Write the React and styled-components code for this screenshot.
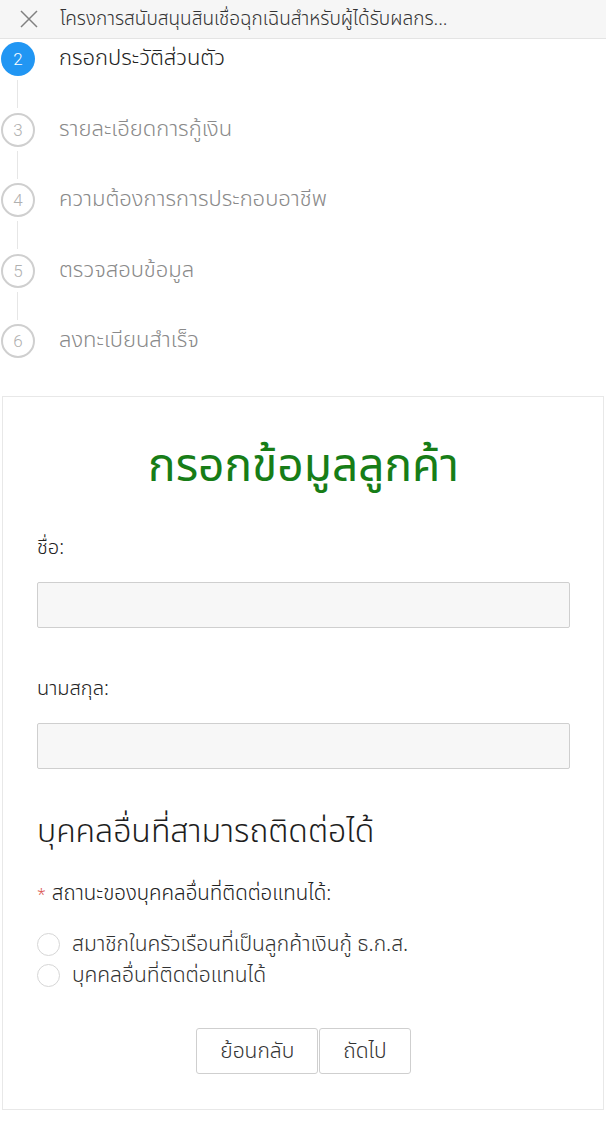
import React from "react";
import styled, { createGlobalStyle } from "styled-components";

const Global = createGlobalStyle`
  html, body { margin: 0; padding: 0; background: #fff; }
  body { font-family: "Noto Sans Thai", "Noto Sans", "Liberation Sans", sans-serif; font-weight: 300; color: #222; }
  * { box-sizing: border-box; }
`;

const Page = styled.div`
  width: 606px;
  min-height: 1140px;
  background: #fff;
`;

const TopBar = styled.header`
  height: 39px;
  display: flex;
  align-items: center;
  background: #f6f6f6;
  border-bottom: 1px solid #e4e4e4;
  padding-left: 20px;
  gap: 22px;
`;

const TopTitle = styled.div`
  font-size: 19px;
  color: #333;
  white-space: nowrap;
`;

const Steps = styled.ol`
  list-style: none;
  margin: 0;
  padding: 3px 0 0 1px;
`;

const Step = styled.li`
  display: grid;
  grid-template-columns: 34px 1fr;
  column-gap: 24px;
`;

const Circle = styled.div`
  width: 34px;
  height: 34px;
  border-radius: 50%;
  display: flex;
  align-items: center;
  justify-content: center;
  font-family: "Roboto", "Liberation Sans", sans-serif;
  font-weight: 300;
  font-size: 17px;
  ${(p) =>
    p.$active
      ? `background: #2196f3; color: #fff;`
      : `border: 2px solid #cfcfcf; color: #b0b0b0;`}
`;

const StepText = styled.div`
  font-size: 22px;
  line-height: 34px;
  color: ${(p) => (p.$active ? "#222" : "#8a8a8a")};
`;

const Connector = styled.div`
  width: 1px;
  height: 28px;
  margin: 4px 0 4.5px 16px;
  background: #e6e6e6;
`;

const Card = styled.section`
  margin: 38px 2px 0 2px;
  border: 1px solid #e8e8e8;
  padding: 40px 33px 35px 34px;
  display: flex;
  flex-direction: column;
`;

const CardTitle = styled.h1`
  margin: 0 0 37px;
  text-align: center;
  font-size: 46px;
  font-weight: 400;
  color: #177d17;
  line-height: 60px;
`;

const Label = styled.label`
  font-size: 20px;
  color: #222;
  line-height: 28px;
  margin-bottom: 20px;
`;

const Input = styled.input`
  height: 46px;
  width: 100%;
  background: #f7f7f7;
  border: 1px solid #cfcfcf;
  border-radius: 2px;
  margin-bottom: ${(p) => (p.$last ? 43 : 47)}px;
`;

const SectionTitle = styled.h2`
  margin: 0 0 28px;
  font-size: 32px;
  font-weight: 300;
  color: #1e1e1e;
  line-height: 40px;
`;

const Required = styled.div`
  font-size: 20.5px;
  color: #222;
  line-height: 28px;
  margin-bottom: 20px;
  span { color: #d9534f; margin-right: 6px; font-size: 16px; }
`;

const RadioRow = styled.label`
  display: flex;
  align-items: center;
  gap: 12px;
  height: 31px;
  font-size: 21px;
  color: #333;
`;

const RadioDot = styled.span`
  width: 23px;
  height: 23px;
  border-radius: 50%;
  border: 1.5px solid #d6d6d6;
  background: #fff;
  flex: none;
`;

const Buttons = styled.div`
  display: flex;
  justify-content: center;
  gap: 1px;
  margin-top: 37px;
`;

const Button = styled.button`
  height: 46px;
  padding: 0 23px;
  background: #fff;
  border: 1px solid #cfcfcf;
  border-radius: 3px;
  font-family: inherit;
  font-weight: 300;
  font-size: 21px;
  color: #333;
`;

const CloseIcon = () => (
  <svg width="18" height="18" viewBox="0 0 18 18" fill="none" stroke="#808080" strokeWidth="1.5">
    <path d="M1 1 L17 17 M17 1 L1 17" />
  </svg>
);

const steps = [
  { n: 2, t: "กรอกประวัติส่วนตัว", active: true },
  { n: 3, t: "รายละเอียดการกู้เงิน" },
  { n: 4, t: "ความต้องการการประกอบอาชีพ" },
  { n: 5, t: "ตรวจสอบข้อมูล" },
  { n: 6, t: "ลงทะเบียนสำเร็จ" },
];

export default function App() {
  return (
    <Page>
      <Global />
      <TopBar>
        <CloseIcon />
        <TopTitle>โครงการสนับสนุนสินเชื่อฉุกเฉินสำหรับผู้ได้รับผลกร...</TopTitle>
      </TopBar>
      <Steps>
        {steps.map((s, i) => (
          <Step key={s.n}>
            <div>
              <Circle $active={s.active}>{s.n}</Circle>
              {i < steps.length - 1 && <Connector />}
            </div>
            <StepText $active={s.active}>{s.t}</StepText>
          </Step>
        ))}
      </Steps>
      <Card>
        <CardTitle>กรอกข้อมูลลูกค้า</CardTitle>
        <Label>ชื่อ:</Label>
        <Input />
        <Label>นามสกุล:</Label>
        <Input $last />
        <SectionTitle>บุคคลอื่นที่สามารถติดต่อได้</SectionTitle>
        <Required>
          <span>*</span>สถานะของบุคคลอื่นที่ติดต่อแทนได้:
        </Required>
        <RadioRow>
          <RadioDot />
          สมาชิกในครัวเรือนที่เป็นลูกค้าเงินกู้ ธ.ก.ส.
        </RadioRow>
        <RadioRow>
          <RadioDot />
          บุคคลอื่นที่ติดต่อแทนได้
        </RadioRow>
        <Buttons>
          <Button>ย้อนกลับ</Button>
          <Button>ถัดไป</Button>
        </Buttons>
      </Card>
    </Page>
  );
}
